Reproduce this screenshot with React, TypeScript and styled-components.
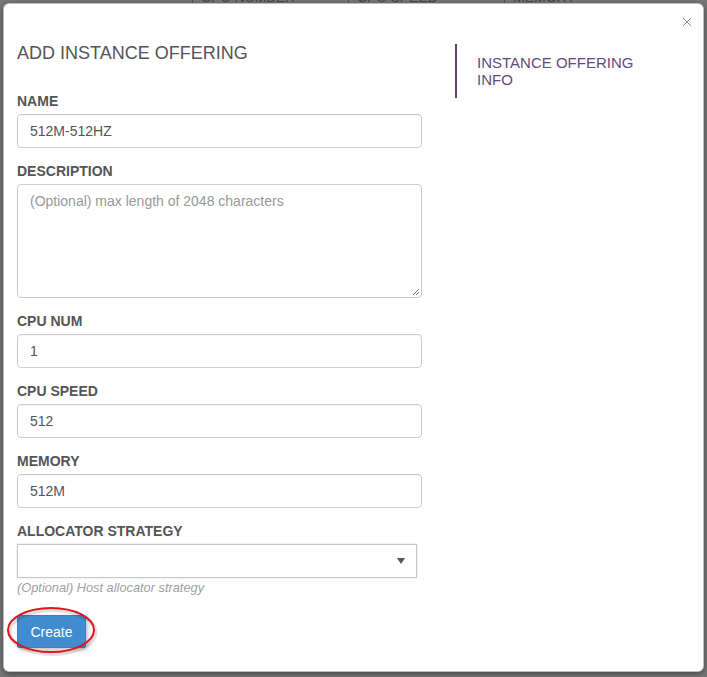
import React from "react";
import styled, { createGlobalStyle } from "styled-components";

const GlobalStyle = createGlobalStyle`
  html, body { margin: 0; padding: 0; }
  body {
    font-family: "Liberation Sans", Arial, Helvetica, sans-serif;
    background: #787878;
  }
  * { box-sizing: border-box; }
`;

const Page = styled.div`
  position: relative;
  width: 707px;
  height: 677px;
  overflow: hidden;
  background: #787878;
`;

const BackHeader = styled.div`
  display: flex;
  margin-top: -11px;
  padding-left: 192px;
  height: 16px;
`;

const BackCell = styled.div<{ $w: number }>`
  width: ${(p) => p.$w}px;
  border-left: 1px solid #505050;
  padding-left: 8px;
  font-size: 14px;
  line-height: 16px;
  color: #454545;
  white-space: nowrap;
`;

const Modal = styled.div`
  position: absolute;
  top: 3px;
  left: 3px;
  width: 701px;
  height: 669px;
  background: #fff;
  border: 1px solid rgba(0, 0, 0, 0.25);
  border-radius: 6px;
  box-shadow: 0 2px 6px rgba(0, 0, 0, 0.45);
`;

const Close = styled.button`
  position: absolute;
  top: 12px;
  right: 10px;
  width: 12px;
  height: 12px;
  padding: 0;
  border: 0;
  background: transparent;
  display: flex;
  align-items: center;
  justify-content: center;
`;

const Body = styled.div`
  display: flex;
  padding: 39px 13px 0 13px;
`;

const LeftCol = styled.div`
  width: 405px;
  display: flex;
  flex-direction: column;
`;

const Title = styled.h4`
  margin: 0 0 31px 0;
  font-size: 18px;
  line-height: 20px;
  font-weight: normal;
  color: #555;
`;

const Group = styled.div`
  display: flex;
  flex-direction: column;
  margin-bottom: 16px;
`;

const Label = styled.label`
  display: block;
  font-size: 14px;
  line-height: 15px;
  font-weight: bold;
  color: #555;
  margin-bottom: 5px;
`;

const Input = styled.div<{ $tone?: string }>`
  height: 34px;
  padding: 6px 12px;
  border: 1px solid #ccc;
  border-radius: 4px;
  font-size: 14px;
  line-height: 20px;
  color: ${(p) => p.$tone || "#555"};
  box-shadow: inset 0 1px 1px rgba(0, 0, 0, 0.04);
`;

const TextArea = styled.div`
  position: relative;
  height: 114px;
  padding: 6px 12px;
  border: 1px solid #ccc;
  border-radius: 4px;
  font-size: 14px;
  line-height: 20px;
  color: #999;
`;

const Grip = styled.svg`
  position: absolute;
  right: 1px;
  bottom: 1px;
`;

const Select = styled.div`
  width: 400px;
  height: 34px;
  border: 1px solid #c8c8c8;
  box-shadow: 0 0 2px rgba(0, 0, 0, 0.15);
  display: flex;
  align-items: center;
  justify-content: flex-end;
  padding-right: 11px;
`;

const Help = styled.div`
  margin-top: 2px;
  font-size: 12.8px;
  line-height: 16px;
  font-style: italic;
  color: #a0a0a0;
`;

const ButtonWrap = styled.div`
  position: relative;
  margin-top: 19px;
  width: 69px;
`;

const Button = styled.button`
  width: 69px;
  height: 33px;
  padding: 0;
  border: 1px solid #3a80c2;
  border-radius: 2px;
  background: #408ccf;
  color: #fff;
  font-family: "Liberation Sans", Arial, sans-serif;
  font-size: 14px;
  box-shadow: 2px 2px 4px rgba(0, 0, 0, 0.25);
`;

const Annotation = styled.svg`
  position: absolute;
  left: -10px;
  top: -10px;
  overflow: visible;
`;

const RightCol = styled.div`
  margin-left: 33px;
  padding-top: 1px;
`;

const InfoBox = styled.div`
  border-left: 2px solid #5b3f7c;
  padding: 10px 0 10px 20px;
  width: 200px;
  font-size: 15px;
  line-height: 17px;
  color: #644a7c;
`;

const InfoText = styled.div`
  width: 175px;
`;

export default function App() {
  return (
    <Page>
      <GlobalStyle />
      <BackHeader>
        <BackCell $w={156}>CPU NUMBER</BackCell>
        <BackCell $w={156}>CPU SPEED</BackCell>
        <BackCell $w={200}>MEMORY</BackCell>
      </BackHeader>
      <Modal>
        <Close aria-label="close">
          <svg width="10" height="10" viewBox="0 0 10 10">
            <path d="M1 1 L9 9 M9 1 L1 9" stroke="#8a8a8a" strokeWidth="1" fill="none" />
          </svg>
        </Close>
        <Body>
          <LeftCol>
            <Title>ADD INSTANCE OFFERING</Title>
            <Group>
              <Label>NAME</Label>
              <Input>512M-512HZ</Input>
            </Group>
            <Group>
              <Label>DESCRIPTION</Label>
              <TextArea>
                (Optional) max length of 2048 characters
                <Grip width="8" height="8" viewBox="0 0 8 8">
                  <path d="M7 1 L1 7 M7 4 L4 7" stroke="#777" strokeWidth="1" fill="none" />
                </Grip>
              </TextArea>
            </Group>
            <Group>
              <Label>CPU NUM</Label>
              <Input $tone="#6e4a4a">1</Input>
            </Group>
            <Group>
              <Label>CPU SPEED</Label>
              <Input>512</Input>
            </Group>
            <Group>
              <Label>MEMORY</Label>
              <Input>512M</Input>
            </Group>
            <Label>ALLOCATOR STRATEGY</Label>
            <Select>
              <svg width="8" height="6" viewBox="0 0 8 6">
                <path d="M0 0 L8 0 L4 6 Z" fill="#555" />
              </svg>
            </Select>
            <Help>(Optional) Host allocator strategy</Help>
            <ButtonWrap>
              <Button>Create</Button>
              <Annotation width="90" height="48" viewBox="0 0 90 48">
                <ellipse cx="44" cy="25" rx="43" ry="22" fill="none" stroke="rgba(0,0,0,0.12)" strokeWidth="4" transform="translate(1.5,2)" />
                <ellipse cx="44" cy="25" rx="43" ry="22" fill="none" stroke="#e0141b" strokeWidth="2" />
              </Annotation>
            </ButtonWrap>
          </LeftCol>
          <RightCol>
            <InfoBox>
              <InfoText>INSTANCE OFFERING INFO</InfoText>
            </InfoBox>
          </RightCol>
        </Body>
      </Modal>
    </Page>
  );
}
